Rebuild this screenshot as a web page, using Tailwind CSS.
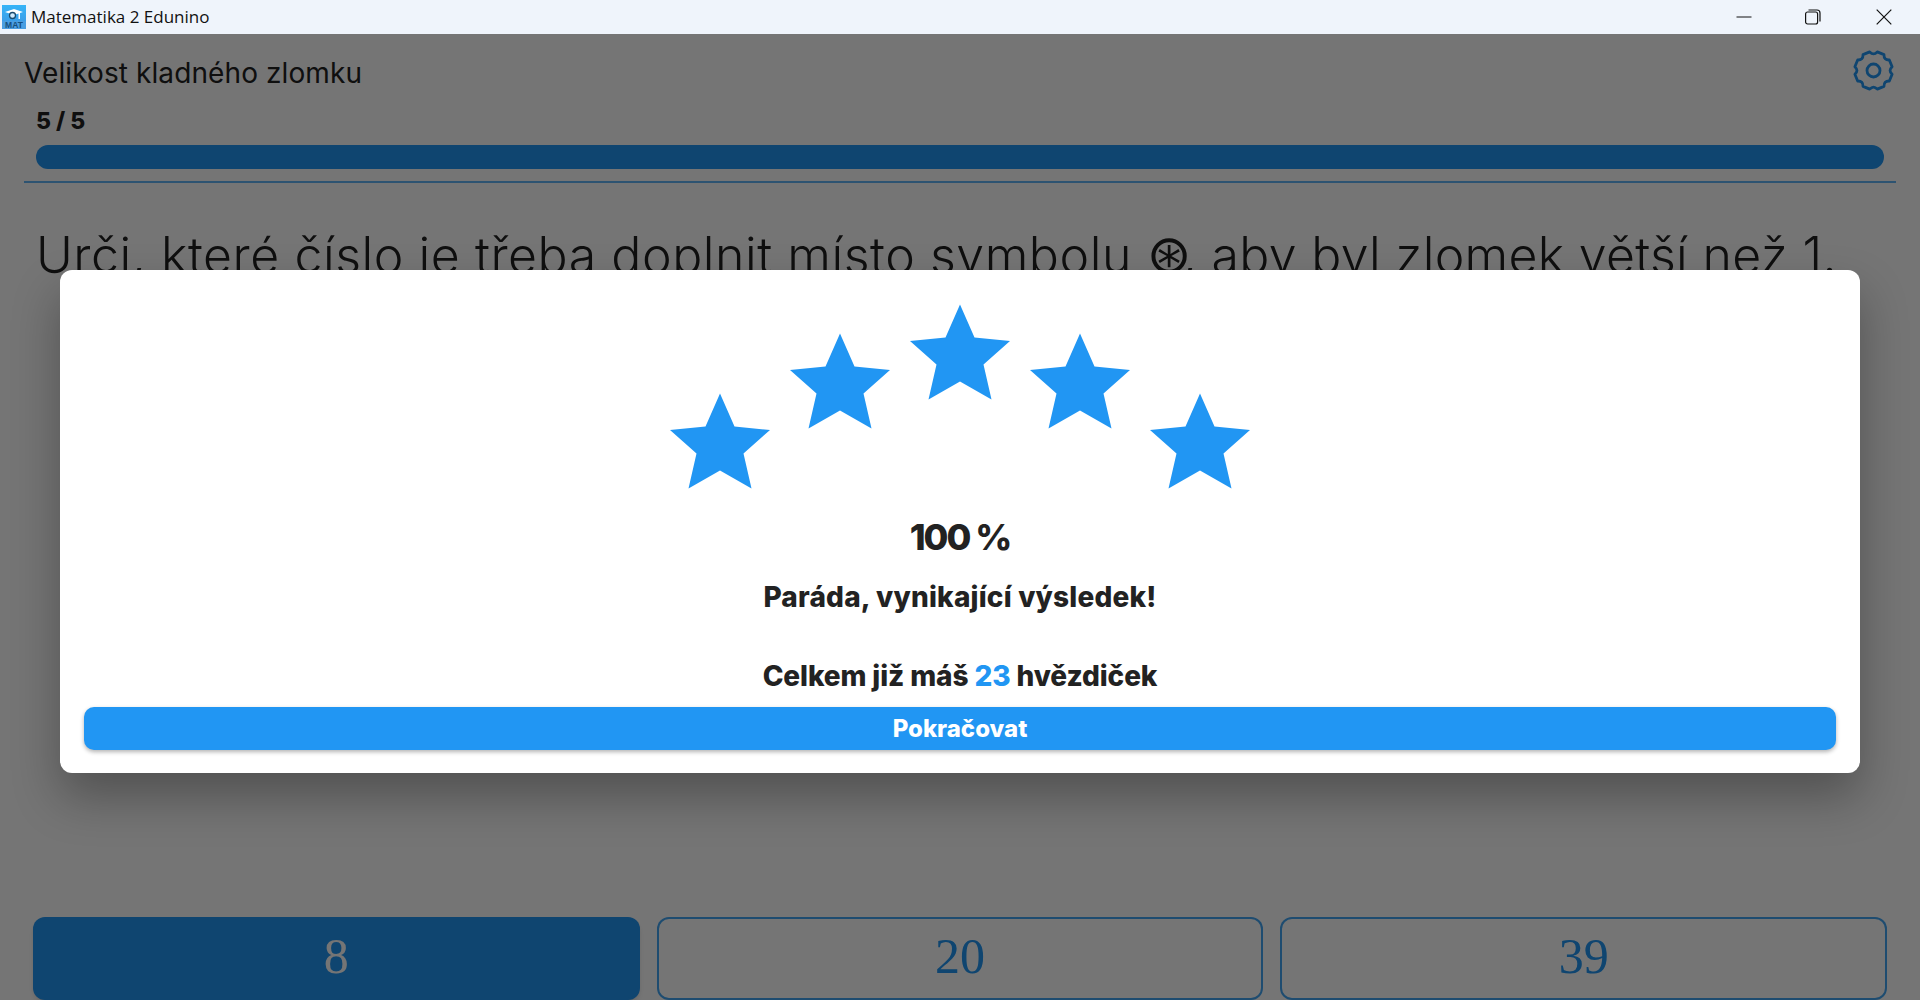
<!doctype html>
<html>
<head>
<meta charset="utf-8">
<script src="https://cdn.jsdelivr.net/npm/@tailwindcss/browser@4"></script>
</head>
<body class="m-0 overflow-hidden bg-white">
<div class="relative h-[1000px] w-[1920px] overflow-hidden bg-white font-['Inter',sans-serif] text-[#222]">
  <header class="relative z-20 flex h-[34px] items-center bg-[#eff4fb]">
    <svg class="ml-[2px] h-[24px] w-[24px]" viewBox="0 0 24 24">
      <defs><linearGradient id="g" x1="0" y1="0" x2="0" y2="1"><stop offset="0" stop-color="#35b4f8"/><stop offset="1" stop-color="#3f93e0"/></linearGradient></defs>
      <rect width="24" height="24" fill="url(#g)"/>
      <path d="M3 7l9-3 9 3-3 1v6h-1.500V8.500L12 10 3 7z" fill="#fff"/>
      <circle cx="10.500" cy="10.500" r="3" fill="#cfe9fb" stroke="#1a4a6e" stroke-width="1.300"/>
      <rect y="16" width="24" height="8" fill="#4a9ee2"/>
      <text x="12" y="23.300" text-anchor="middle" font-family="Liberation Sans" font-weight="700" font-size="8.500" fill="#17507f">MAT</text>
    </svg>
    <span class="ml-[5px] font-['Open_Sans',sans-serif] text-[17px] leading-[34px] text-[#111]">Matematika 2 Edunino</span>
    <div class="ml-auto flex h-full items-center">
      <svg class="mr-[53px] h-[16px] w-[16px]" viewBox="0 0 16 16"><path d="M0.500 8h15" stroke="#111" stroke-width="1" fill="none"/></svg>
      <svg class="mr-[55px] h-[16px] w-[16px]" viewBox="0 0 16 16" fill="none" stroke="#111" stroke-width="1.200"><rect x="0.600" y="3" width="12" height="12" rx="2"/><path d="M3.500 1h8.500a3 3 0 0 1 3 3v8.500"/></svg>
      <svg class="mr-[28px] h-[16px] w-[16px]" viewBox="0 0 16 16" fill="none" stroke="#111" stroke-width="1.200"><path d="M0.700 0.700l14.600 14.600M15.300 0.700L0.700 15.300"/></svg>
    </div>
  </header>

  <main class="flex h-[966px] flex-col px-[24px]">
    <div class="flex h-[72px] items-start justify-between pt-[20px]">
      <h1 class="text-[28px] leading-[38px] font-normal tracking-[0.1px]">Velikost kladného zlomku</h1>
      <svg class="mr-[1px] mt-[-5px] h-[43px] w-[43px]" viewBox="-1.500 -1.500 43 43" fill="none" stroke="#2196f3" stroke-width="2.800" stroke-linejoin="round">
        <path d="M38.620 23.790L35.840 30.490Q30.250 30.250 30.490 35.840L23.790 38.620Q20 34.500 16.210 38.620L9.510 35.840Q9.750 30.250 4.160 30.490L1.380 23.790Q5.500 20 1.380 16.210L4.160 9.510Q9.750 9.750 9.510 4.160L16.210 1.380Q20 5.500 23.790 1.380L30.490 4.160Q30.250 9.750 35.840 9.510L38.620 16.210Q34.500 20 38.620 23.790Z"/>
        <circle cx="20" cy="20" r="6.500"/>
      </svg>
    </div>
    <div class="px-[12px]">
      <div class="text-[23px] leading-[30px] font-extrabold">5 / 5</div>
      <div class="mt-[9px] h-[24px] rounded-full bg-[#2196f3]"></div>
    </div>
    <div class="mt-[12px] h-[1px] border-t-[2px] border-[#2196f3]/70"></div>
    <p class="mt-[38px] whitespace-nowrap px-[12px] text-[50px] leading-[68px] font-light tracking-[0.55px]">Urči, které číslo je třeba doplnit místo symbolu <span class="font-['DejaVu_Sans',sans-serif] text-[54px] leading-none font-normal tracking-[-9px]">⊛</span><span class="tracking-[0.3px]">, aby byl zlomek větší než 1.</span></p>
    <div class="mt-auto grid grid-cols-3 gap-[17px] px-[9px]">
      <button class="flex h-[83px] items-center justify-center rounded-[12px] border-[2px] border-[#2196f3]/85 bg-[#2196f3] pb-[4px] font-['Liberation_Serif',serif] text-[50px] text-white shadow-md">8</button>
      <button class="flex h-[83px] items-center justify-center rounded-[12px] border-[2px] border-[#2196f3]/85 bg-white pb-[4px] font-['Liberation_Serif',serif] text-[50px] text-[#2196f3]">20</button>
      <button class="flex h-[83px] items-center justify-center rounded-[12px] border-[2px] border-[#2196f3]/85 bg-white pb-[4px] font-['Liberation_Serif',serif] text-[50px] text-[#2196f3]">39</button>
    </div>
  </main>

  <div class="absolute inset-x-0 top-[34px] bottom-0 z-10 bg-black/54"></div>

  <section class="absolute left-[60px] top-[270px] z-30 flex h-[503px] w-[1800px] flex-col items-center rounded-[12px] bg-white px-[24px] shadow-[0_24px_48px_rgba(0,0,0,0.3)]">
    <div class="flex h-[242px] items-start justify-center gap-[20px] pt-[34px]">
      <svg class="mt-[89px] h-[96px] w-[100px]" viewBox="0 0 100 95"><path fill="#2196f3" d="M50 0L64.500 33 100 36.500 73.500 60 81.500 95 50 77 18.500 95 26.500 60 0 36.500 35.500 33z"/></svg>
      <svg class="mt-[29px] h-[96px] w-[100px]" viewBox="0 0 100 95"><path fill="#2196f3" d="M50 0L64.500 33 100 36.500 73.500 60 81.500 95 50 77 18.500 95 26.500 60 0 36.500 35.500 33z"/></svg>
      <svg class="h-[96px] w-[100px]" viewBox="0 0 100 95"><path fill="#2196f3" d="M50 0L64.500 33 100 36.500 73.500 60 81.500 95 50 77 18.500 95 26.500 60 0 36.500 35.500 33z"/></svg>
      <svg class="mt-[29px] h-[96px] w-[100px]" viewBox="0 0 100 95"><path fill="#2196f3" d="M50 0L64.500 33 100 36.500 73.500 60 81.500 95 50 77 18.500 95 26.500 60 0 36.500 35.500 33z"/></svg>
      <svg class="mt-[89px] h-[96px] w-[100px]" viewBox="0 0 100 95"><path fill="#2196f3" d="M50 0L64.500 33 100 36.500 73.500 60 81.500 95 50 77 18.500 95 26.500 60 0 36.500 35.500 33z"/></svg>
    </div>
    <div class="text-[36px] leading-[50px] font-extrabold tracking-[-2px]">100 %</div>
    <div class="mt-[15px] text-[28px] leading-[40px] font-extrabold tracking-[0.2px]">Paráda, vynikající výsledek!</div>
    <div class="mt-[39px] text-[28px] leading-[40px] font-extrabold tracking-[-0.1px]">Celkem již máš <span class="text-[#2196f3]">23</span> hvězdiček</div>
    <button class="mt-[11px] h-[43px] w-full rounded-[10px] bg-[#2196f3] text-[24px] leading-[43px] font-extrabold text-white shadow-[0_2px_4px_rgba(0,0,0,0.3)]">Pokračovat</button>
  </section>
</div>
</body>
</html>
